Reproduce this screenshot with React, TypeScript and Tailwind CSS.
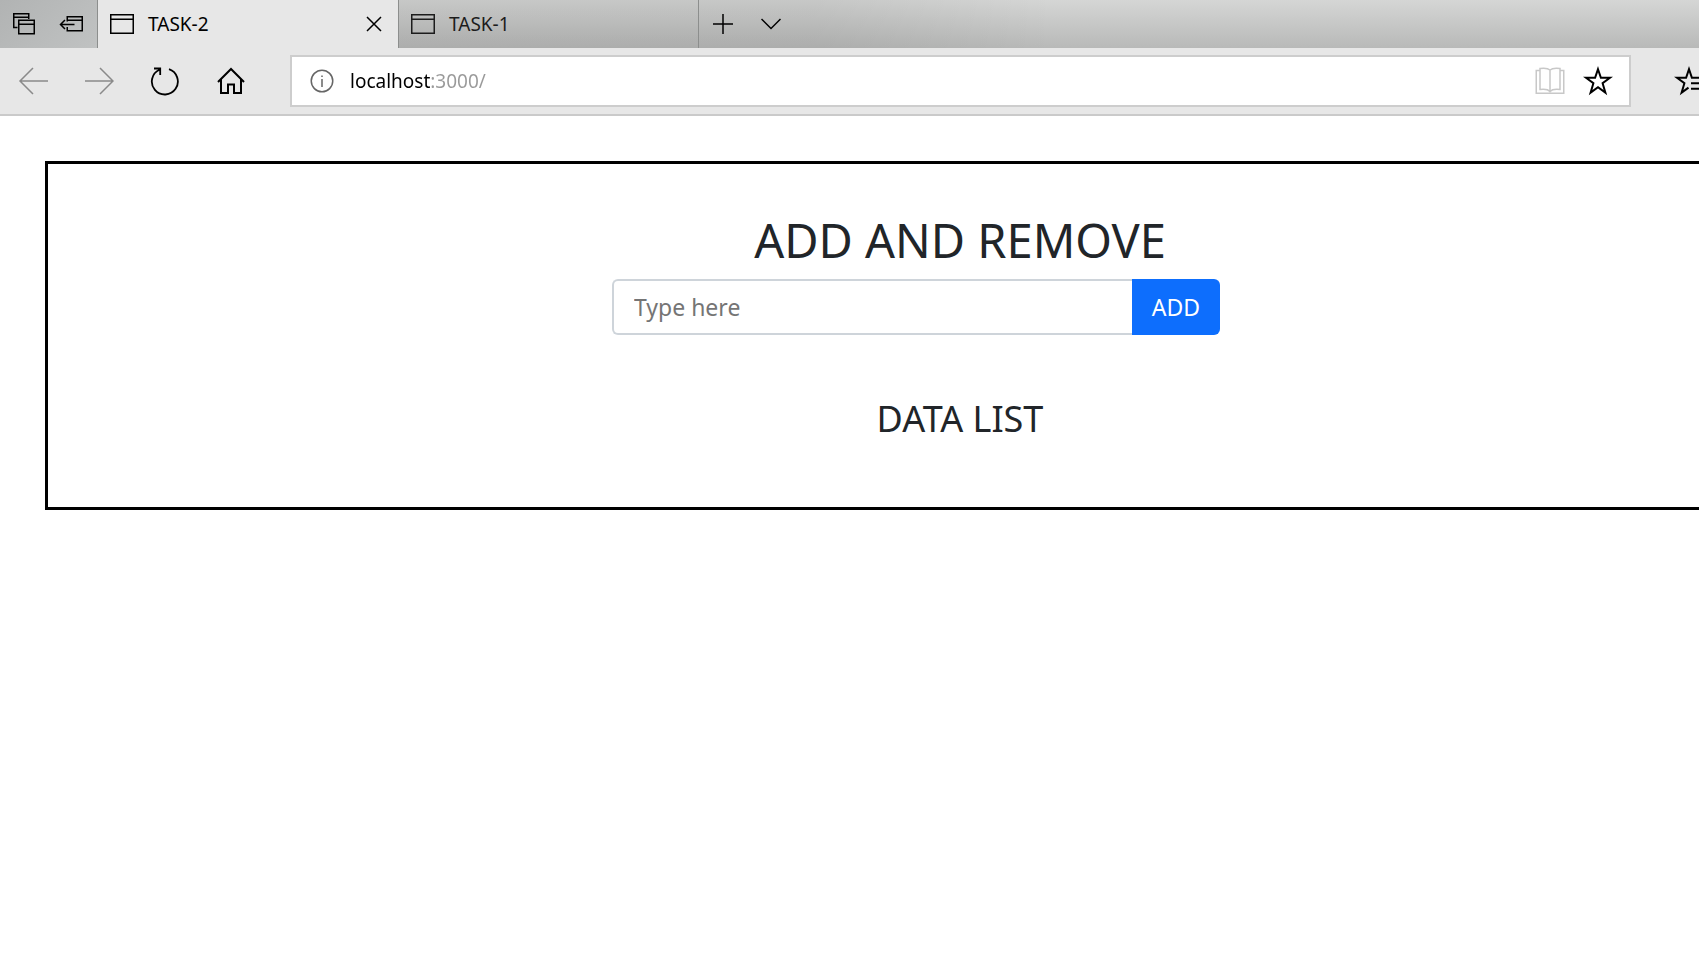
import { useState } from "react";
import type { ReactNode } from "react";

type IconProps = { width: number; height: number; className?: string; children: ReactNode };

function Icon({ width, height, className, children }: IconProps) {
  return (
    <svg
      width={width}
      height={height}
      viewBox={`0 0 ${width} ${height}`}
      fill="none"
      stroke="currentColor"
      strokeWidth="1.5"
      aria-hidden="true"
      className={className}
    >
      {children}
    </svg>
  );
}

const WindowIcon = () => (
  <Icon width={24} height={20} className="shrink-0">
    <path d="M.75 .75H23.25V19.25H.75ZM.75 5.25H23.25" />
  </Icon>
);

const STAR = "M15 3.2 17.9 11.8H27L19.6 17.2 22.4 26.6 15 21.2 7.6 26.6 10.4 17.2 3 11.8H12.1Z";

function TabStrip() {
  return (
    <div className="flex h-12 bg-[linear-gradient(90deg,#00000011_0%,#00000011_48%,#00000000_62%),linear-gradient(180deg,#d5d6d5,#b8b9b8)]">
      <div className="flex w-[98px] shrink-0 items-center justify-between border-r border-[#8c8e8d] bg-[linear-gradient(135deg,#b1b3b3,#c0c2c2)] pr-3.5 pl-3">
        <button type="button" aria-label="Tabs you've set aside">
          <Icon width={24} height={24}>
            <path d="M5.5 15.5H1.75V1.75H16.75V7M1.75 5.25H16.75M6.75 8.25H22.25V21.75H6.75ZM6.75 12.25H22.25" />
          </Icon>
        </button>
        <button type="button" aria-label="Set these tabs aside">
          <Icon width={24} height={24}>
            <path d="M8.25 9.5V4.75H23.25V18.75H8.25V15M8.25 8.25H23.25M1.5 12.5H15.5M6 8 1.5 12.5 6 17" />
          </Icon>
        </button>
      </div>
      <div className="flex w-[300px] shrink-0 items-center gap-3.5 bg-[#e7e7e7] pr-4 pl-3">
        <WindowIcon />
        <span className="flex-1 text-[19px] text-black">TASK-2</span>
        <button type="button" aria-label="Close tab">
          <Icon width={16} height={16}>
            <path d="M1 1 15 15M15 1 1 15" />
          </Icon>
        </button>
      </div>
      <div className="flex w-[301px] shrink-0 items-center gap-3.5 border-x border-[#8c8e8d] pr-4 pl-3 text-[#1c1c1c]">
        <WindowIcon />
        <span className="flex-1 text-[19px]">TASK-1</span>
      </div>
      <div className="flex items-center gap-7 pl-3.5">
        <button type="button" aria-label="New tab">
          <Icon width={20} height={20}>
            <path d="M0 10H20M10 0V20" />
          </Icon>
        </button>
        <button type="button" aria-label="Show tab previews">
          <Icon width={20} height={12}>
            <path d="M.5 1 10 10.5 19.5 1" />
          </Icon>
        </button>
      </div>
    </div>
  );
}

function Toolbar() {
  const [url, setUrl] = useState("localhost:3000/");
  return (
    <div className="flex h-[68px] items-center border-b-2 border-[#cacaca] bg-[#e7e7e7]">
      <div className="flex w-[290px] shrink-0 items-center gap-9 pl-[18px]">
        <button type="button" aria-label="Back" className="text-[#8a8a8a]">
          <Icon width={30} height={28}>
            <path d="M30 14H2M15 1 2 14 15 27" />
          </Icon>
        </button>
        <button type="button" aria-label="Forward" className="text-[#8a8a8a]">
          <Icon width={30} height={28}>
            <path d="M1 14H29M16 1 29 14 16 27" />
          </Icon>
        </button>
        <button type="button" aria-label="Refresh">
          <Icon width={30} height={30}>
            <path strokeWidth="1.8" d="M19 3.2A13 13 0 1 1 9.4 3.7M4 2.5H10.2V9" />
          </Icon>
        </button>
        <button type="button" aria-label="Home">
          <Icon width={30} height={30}>
            <path strokeWidth="2" d="M2 16 15 3 28 16M5 13.5V27H12V18.5H18V27H25V13.5" />
          </Icon>
        </button>
      </div>
      <div className="flex h-[52px] flex-1 items-center border-2 border-[#cdcdcd] bg-white pr-4 pl-[18px]">
        <Icon width={24} height={24} className="shrink-0 text-[#666666]">
          <circle cx="12" cy="12" r="10.75" />
          <path d="M12 10V18M12 6.5V8" />
        </Icon>
        <input
          type="text"
          aria-label="Address"
          value={url}
          onChange={(e) => setUrl(e.target.value)}
          className="ml-4 min-w-0 flex-1 bg-[linear-gradient(90deg,#000_80px,#999_80px)] bg-clip-text text-[19px] text-transparent caret-black outline-none"
        />
        <button type="button" aria-label="Reading view" className="mr-[18px] text-[#c8c8c8]">
          <Icon width={30} height={28}>
            <path d="M5 3.5H1.25V26.25H28.75V3.5H25M15 3C13 1.2 9 1 5 1.5V22.5C9 22 13 22.2 15 24.5 17 22.2 21 22 25 22.5V1.5C21 1 17 1.2 15 3ZM15 3V24.5" />
          </Icon>
        </button>
        <button type="button" aria-label="Add to favorites">
          <Icon width={30} height={30}>
            <path strokeWidth="2" d={STAR} />
          </Icon>
        </button>
      </div>
      <div className="flex w-[68px] shrink-0 justify-end overflow-hidden">
        <button type="button" aria-label="Favorites hub" className="w-[25px] overflow-hidden">
          <Icon width={30} height={30}>
            <path
              strokeWidth="2"
              d="M30 11.8H17.9L15 3.2 12.1 11.8H3L10.4 17.2 7.6 26.6 14.5 21.6M17 17.2H30M17 22.8H30"
            />
          </Icon>
        </button>
      </div>
    </div>
  );
}

export default function App() {
  const [text, setText] = useState("");
  const [items, setItems] = useState<string[]>([]);

  const add = () => {
    if (text.trim() === "") return;
    setItems([...items, text]);
    setText("");
  };

  return (
    <div className="min-h-screen overflow-hidden bg-white font-['Noto_Sans','Open_Sans',sans-serif] text-black">
      <header>
        <TabStrip />
        <Toolbar />
      </header>
      <main className="mt-[45px] -mr-44 ml-[45px] flex flex-col items-center border-3 border-black pt-12 pb-[66px] text-[#212529]">
        <h1 className="text-[47px] leading-[57px]">ADD AND REMOVE</h1>
        <form
          className="mt-2.5 mr-[88px] flex h-14 w-1/3"
          onSubmit={(e) => {
            e.preventDefault();
            add();
          }}
        >
          <input
            type="text"
            aria-label="New item"
            placeholder="Type here"
            value={text}
            onChange={(e) => setText(e.target.value)}
            className="min-w-0 flex-1 rounded-l-md border-2 border-r-0 border-[#ced4da] px-5 text-[23px] outline-none placeholder:text-[#757575]"
          />
          <button type="submit" className="w-[88px] rounded-r-md bg-[#0d6efd] text-[23px] text-white">
            ADD
          </button>
        </form>
        <h2 className="mt-[62px] text-[36px] leading-[44px]">DATA LIST</h2>
        <ul>
          {items.map((item, i) => (
            <li key={i} className="flex items-center gap-4 text-[23px]">
              {item}
              <button type="button" onClick={() => setItems(items.filter((_, j) => j !== i))}>
                REMOVE
              </button>
            </li>
          ))}
        </ul>
      </main>
    </div>
  );
}
